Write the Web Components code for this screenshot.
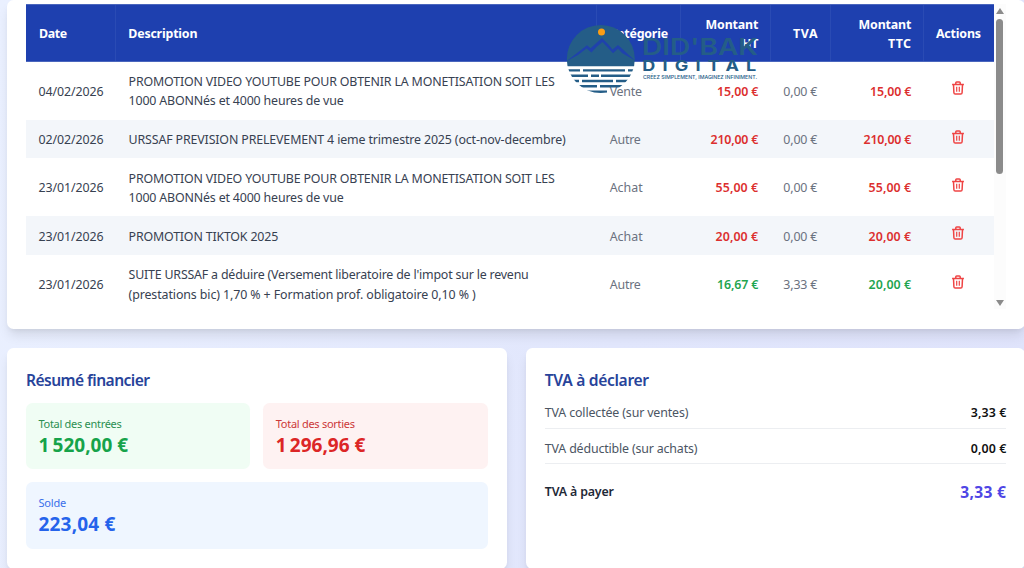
<!DOCTYPE html>
<html lang="fr">
<head>
<meta charset="utf-8">
<title>Comptabilité</title>
<style>
  body {
    margin: 0;
    width: 1024px;
    height: 568px;
    overflow: hidden;
    font-family: "Noto Sans", "Open Sans", sans-serif;
    background: linear-gradient(100deg, #eaf0ff 0%, #e1e6fc 60%, #dfe3fb 100%);
  }
</style>
</head>
<body>
<accounting-page></accounting-page>

<script>
// Text tracked so that it fills a given width in px
class FitText extends HTMLElement {
  constructor() {
    super();
    this.attachShadow({ mode: 'open' });
    this.shadowRoot.innerHTML = `
      <style>
        :host { display: inline-block; white-space: nowrap; }
      </style>
      <span><slot></slot></span>
    `;
  }

  connectedCallback() {
    const wanted = parseFloat(this.getAttribute('w'));
    if (!wanted) return;
    const natural = this.shadowRoot.querySelector('span').getBoundingClientRect().width;
    const spacing = (wanted - natural) / this.textContent.trim().length;
    this.style.letterSpacing = `${spacing}px`;
  }
}

class UiCard extends HTMLElement {
  constructor() {
    super();
    this.attachShadow({ mode: 'open' });
    this.shadowRoot.innerHTML = `
      <style>
        :host {
          display: block;
          box-sizing: border-box;
          background: #fff;
          border-radius: 6.5px;
          padding: 19px;
          box-shadow: 0 8px 12px -2px rgba(0, 0, 0, .1), 0 3px 5px -2px rgba(0, 0, 0, .06);
        }
      </style>
      <slot></slot>
    `;
  }
}

class TrashIcon extends HTMLElement {
  constructor() {
    super();
    this.attachShadow({ mode: 'open' });
    this.shadowRoot.innerHTML = `
      <style>
        :host { display: block; width: 12px; height: 14px; }
        svg { display: block; }
      </style>
      <svg width="12" height="14" viewBox="0 0 12 14" fill="none" stroke="#ef4444" stroke-width="1.5">
        <path d="M.1 3.5H11.9M3.8 3.2V1.8Q3.8.9 4.7.9H7.3Q8.2.9 8.2 1.8V3.2"/>
        <path d="M1.5 3.5L1.9 11.8Q2 13 3.2 13H8.8Q10 13 10.1 11.8L10.5 3.5"/>
        <path d="M4.7 5.8V10.8M7.3 5.8V10.8" stroke-width="1.2"/>
      </svg>
    `;
  }
}

class BrandLogo extends HTMLElement {
  constructor() {
    super();
    this.attachShadow({ mode: 'open' });
    this.shadowRoot.innerHTML = `
      <style>
        :host { display: block; width: 204px; height: 72px; }
        svg { display: block; overflow: visible; font-family: Inter, sans-serif; }
      </style>
      <svg width="204" height="72" viewBox="566 23 204 72" fill="#245d87">
        <clipPath id="disc"><circle cx="600.8" cy="59" r="34"/></clipPath>
        <g clip-path="url(#disc)">
          <path d="M566 23H636V66.2H566Z"/>
          <path d="M566 61.5L587 45.3 590.5 48.2 602 38 608 44 612.5 49.5 618 45 635 60.5 622 53 618 48.8 613 53.2 602.5 42 596.5 47 591.5 52.5 586.5 48.5 578 55Z" fill="#1f42ac"/>
          <path d="M566 69.2H580V71.6H566ZM583 69.2H625V71.6H583ZM628 69.2H636V71.6H628ZM566 74.6H588V77H566ZM591 74.6H599V77H591ZM601 74.6H636V77H601ZM566 79.8H579V82.2H566ZM582 79.8H613V82.2H582ZM616 79.8H636V82.2H616ZM566 85H597V87.4H566ZM600 85H636V87.4H600ZM566 90.6H607V93H566Z"/>
        </g>
        <circle cx="601.5" cy="32" r="3.5" fill="#fb9d14"/>
        <text x="642" y="55" font-size="22.8" font-weight="600" textLength="116" lengthAdjust="spacingAndGlyphs">DID'BAK</text>
        <text transform="translate(642.3 70.8) scale(1.22 1)" font-size="14.8" font-weight="700" letter-spacing="5.9">DIGITAL</text>
        <text x="643" y="79.4" font-size="5.4" font-weight="500" textLength="114" lengthAdjust="spacingAndGlyphs">CRÉEZ SIMPLEMENT, IMAGINEZ INFINIMENT.</text>
      </svg>
    `;
  }
}

class ScrollTrack extends HTMLElement {
  constructor() {
    super();
    this.attachShadow({ mode: 'open' });
    this.shadowRoot.innerHTML = `
      <style>
        :host {
          display: flex;
          flex-direction: column;
          align-items: center;
          box-sizing: border-box;
          width: 12px;
          height: 305px;
          padding: 4px 0 3px;
          background: #fcfcfc;
        }
        svg { display: block; fill: #8b8b8b; }
        .thumb { width: 7px; height: 155px; margin: 5px 0 auto; border-radius: 4px; background: #8b8b8b; }
      </style>
      <svg width="8" height="6"><path d="M4 0L8 6H0Z"/></svg>
      <div class="thumb"></div>
      <svg width="8" height="6"><path d="M0 0H8L4 6Z"/></svg>
    `;
  }
}

const ENTRIES = [
  { date: '04/02/2026', text: [['PROMOTION VIDEO YOUTUBE POUR OBTENIR LA MONETISATION SOIT LES', 426], ['1000 ABONNés et 4000 heures de vue', 215]], cat: ['Vente', 32], ht: ['15,00 €', 41], tva: '0,00 €', ttc: ['15,00 €', 41], tone: 'out' },
  { date: '02/02/2026', text: [['URSSAF PREVISION PRELEVEMENT 4 ieme trimestre 2025 (oct-nov-decembre)', 437]], cat: ['Autre', 31], ht: ['210,00 €', 47.5], tva: '0,00 €', ttc: ['210,00 €', 47.5], tone: 'out' },
  { date: '23/01/2026', text: [['PROMOTION VIDEO YOUTUBE POUR OBTENIR LA MONETISATION SOIT LES', 426], ['1000 ABONNés et 4000 heures de vue', 215]], cat: ['Achat', 33], ht: ['55,00 €', 42.5], tva: '0,00 €', ttc: ['55,00 €', 42.5], tone: 'out' },
  { date: '23/01/2026', text: [['PROMOTION TIKTOK 2025', 149.5]], cat: ['Achat', 33], ht: ['20,00 €', 42.5], tva: '0,00 €', ttc: ['20,00 €', 42.5], tone: 'out' },
  { date: '23/01/2026', text: [["SUITE URSSAF a déduire (Versement liberatoire de l'impot sur le revenu", 400], ['(prestations bic) 1,70 % + Formation prof. obligatoire 0,10 % )', 347]], cat: ['Autre', 31], ht: ['16,67 €', 41], tva: '3,33 €', ttc: ['20,00 €', 42.5], tone: 'in' },
];

const fit = ([text, w]) => `<fit-text w="${w}">${text}</fit-text>`;

class EntryTable extends HTMLElement {
  constructor() {
    super();
    this.attachShadow({ mode: 'open' });
    this.shadowRoot.innerHTML = `
      <style>
        :host { display: block; width: 968px; height: 304.5px; overflow: hidden; font-size: 12.4px; line-height: 19.35px; }
        .row, .head {
          display: grid;
          grid-template-columns: 89.4px 481.1px 83.5px 90px 60px 93px 71px;
        }
        .row { align-items: center; padding: 10.4px 0 8.9px; color: #374151; }
        .row:nth-of-type(odd) { background: #f3f6fa; }
        .row:nth-of-type(even) { background: #fff; }
        .row > div { padding: 0 12.6px; }
        .row > div:nth-child(2), .row > .cat { padding-left: 13.2px; }
        .row > .num { padding-right: 11.9px; text-align: right; }
        .row > .tva { padding-right: 12.7px; }
        fit-text { display: block; width: max-content; }
        .num fit-text { margin-left: auto; }
        .head {
          box-sizing: border-box;
          height: 57.2px;
          font-weight: 700;
          color: #fff;
          background: #1e40af;
          border: solid #4a66bd;
          border-width: 1px 0;
        }
        .head > div { display: flex; flex-direction: column; justify-content: center; padding: 2px 12.9px 0; }
        .head > .num { padding-right: 11.9px; }
        .head > div + div { box-shadow: inset 1px 0 #2a4bb4; }
        .cat, .tva { color: #6b7280; }
        .sum { font-weight: 600; }
        .row > .out { color: #dc2f2f; }
        .row > .in { color: #1fa550; }
        trash-icon { margin: -6px auto 0; }
      </style>
      <div class="head">
        <div>${fit(['Date', 28])}</div>
        <div>${fit(['Description', 69])}</div>
        <div>${fit(['Catégorie', 58.5])}</div>
        <div class="num">${fit(['Montant', 52.5])}${fit(['HT', 16])}</div>
        <div class="num">${fit(['TVA', 25])}</div>
        <div class="num">${fit(['Montant', 52.5])}${fit(['TTC', 23])}</div>
        <div>${fit(['Actions', 45])}</div>
      </div>
      ${ENTRIES.map((e) => `
        <div class="row">
          <div>${fit([e.date, 65])}</div>
          <div>${e.text.map(fit).join('')}</div>
          <div class="cat">${fit(e.cat)}</div>
          <div class="num sum ${e.tone}">${fit(e.ht)}</div>
          <div class="num tva">${fit([e.tva, 34])}</div>
          <div class="num sum ${e.tone}">${fit(e.ttc)}</div>
          <div><trash-icon></trash-icon></div>
        </div>
      `).join('')}
    `;
  }
}

class StatTile extends HTMLElement {
  constructor() {
    super();
    this.attachShadow({ mode: 'open' });
    this.shadowRoot.innerHTML = `
      <style>
        :host {
          display: flex;
          flex-direction: column;
          box-sizing: border-box;
          height: 66.5px;
          padding: 13.3px 12.5px;
          border-radius: 6.5px;
        }
        :host([tone="green"]) { background: #f0fdf4; color: #16a34a; --label: #2b8f51; }
        :host([tone="red"]) { background: #fef2f2; color: #dc2626; --label: #cc3838; }
        :host([tone="blue"]) { background: #eff6ff; color: #2563eb; --label: #3a6fea; }
        .label { font-size: 11px; line-height: 16px; color: var(--label); }
        .value { font-size: 19px; line-height: 27px; font-weight: 700; }
      </style>
      <div class="label"><slot name="label"></slot></div>
      <div class="value"><slot></slot></div>
    `;
  }
}

class VatLine extends HTMLElement {
  constructor() {
    super();
    this.attachShadow({ mode: 'open' });
    this.shadowRoot.innerHTML = `
      <style>
        :host {
          display: flex;
          justify-content: space-between;
          align-items: center;
          box-sizing: border-box;
          height: 35.2px;
          padding-top: 4px;
          border-bottom: 1px solid #eceef1;
          font-size: 12.4px;
          color: #4b5563;
        }
        .value { color: #111; font-weight: 600; }
        :host([total]) { height: 50px; border: 0; padding-top: 5px; color: #1f2937; font-weight: 600; }
        :host([total]) .value { font-size: 15.6px; font-weight: 700; color: #4f46e5; }
      </style>
      <span><slot></slot></span>
      <span class="value"><slot name="value"></slot></span>
    `;
  }
}

class AccountingPage extends HTMLElement {
  constructor() {
    super();
    this.attachShadow({ mode: 'open' });
    this.shadowRoot.innerHTML = `
      <style>
        :host {
          display: flex;
          flex-direction: column;
          gap: 19.3px;
          width: 1017.5px;
          padding-left: 7px;
        }
        .entries { height: 329px; padding-top: 4.4px; }
        .scroll { display: flex; }
        .summary { display: grid; grid-template-columns: 499.5px 499.5px; gap: 19.3px; }
        .summary ui-card { height: 221px; }
        h2 { margin: 0; font-size: 15.6px; line-height: 26px; font-weight: 600; color: #27439a; }
        .tiles { display: grid; grid-template-columns: 1fr 1fr; gap: 13px; margin-top: 9.4px; }
        .wide { grid-column: span 2; }
        .vat { margin-top: .5px; }
        brand-logo { position: absolute; left: 566px; top: 23px; }
      </style>
      <ui-card class="entries">
        <div class="scroll">
          <entry-table></entry-table>
          <scroll-track></scroll-track>
        </div>
      </ui-card>
      <div class="summary">
        <ui-card>
          <h2>${fit(['Résumé financier', 123.5])}</h2>
          <div class="tiles">
            <stat-tile tone="green"><fit-text slot="label" w="83">Total des entrées</fit-text><fit-text w="90">1\u202f520,00 €</fit-text></stat-tile>
            <stat-tile tone="red"><fit-text slot="label" w="79">Total des sorties</fit-text><fit-text w="90">1\u202f296,96 €</fit-text></stat-tile>
            <stat-tile tone="blue" class="wide"><fit-text slot="label" w="27.5">Solde</fit-text><fit-text w="77">223,04 €</fit-text></stat-tile>
          </div>
        </ui-card>
        <ui-card>
          <h2>${fit(['TVA à déclarer', 104])}</h2>
          <div class="vat">
            <vat-line><fit-text w="143.5">TVA collectée (sur ventes)</fit-text><fit-text slot="value" w="35.5">3,33 €</fit-text></vat-line>
            <vat-line><fit-text w="152.5">TVA déductible (sur achats)</fit-text><fit-text slot="value" w="35.5">0,00 €</fit-text></vat-line>
            <vat-line total><fit-text w="69">TVA à payer</fit-text><fit-text slot="value" w="46">3,33 €</fit-text></vat-line>
          </div>
        </ui-card>
      </div>
      <brand-logo></brand-logo>
    `;
  }
}

// fit-text goes last, so that each text is measured inside its final styles
customElements.define('ui-card', UiCard);
customElements.define('trash-icon', TrashIcon);
customElements.define('brand-logo', BrandLogo);
customElements.define('scroll-track', ScrollTrack);
customElements.define('entry-table', EntryTable);
customElements.define('stat-tile', StatTile);
customElements.define('vat-line', VatLine);
customElements.define('accounting-page', AccountingPage);
customElements.define('fit-text', FitText);
</script>
</body>
</html>
